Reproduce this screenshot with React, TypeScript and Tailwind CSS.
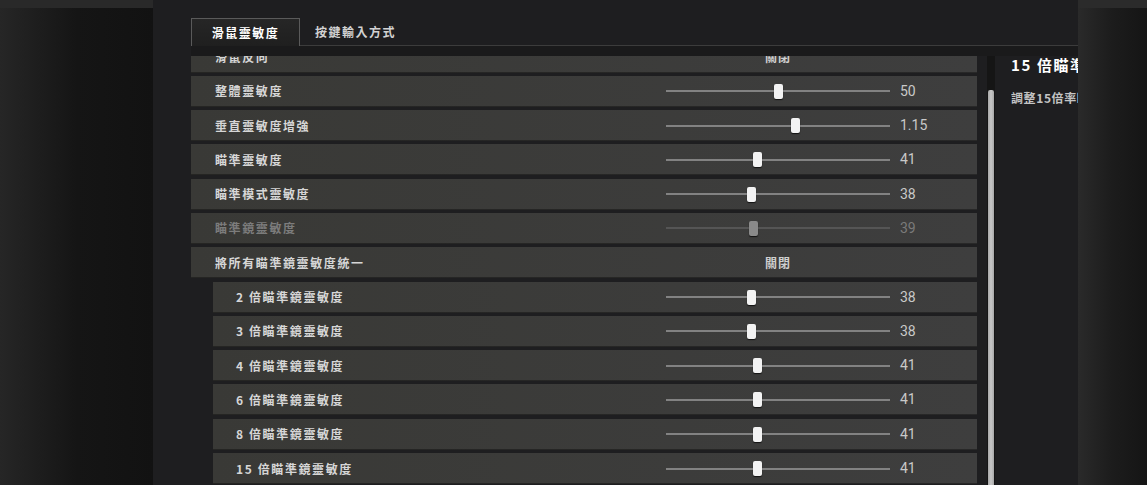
import React from 'react';

type Row = {
  label: string;
  toggle?: string;
  pct?: number;
  value?: string;
  disabled?: boolean;
  sub?: boolean;
};

const rows: Row[] = [
  { label: '滑鼠反向', toggle: '關閉' },
  { label: '整體靈敏度', pct: 50.2, value: '50' },
  { label: '垂直靈敏度增強', pct: 57.6, value: '1.15' },
  { label: '瞄準靈敏度', pct: 41, value: '41' },
  { label: '瞄準模式靈敏度', pct: 38, value: '38' },
  { label: '瞄準鏡靈敏度', pct: 39, value: '39', disabled: true },
  { label: '將所有瞄準鏡靈敏度統一', toggle: '關閉' },
  { label: '2 倍瞄準鏡靈敏度', pct: 38, value: '38', sub: true },
  { label: '3 倍瞄準鏡靈敏度', pct: 38, value: '38', sub: true },
  { label: '4 倍瞄準鏡靈敏度', pct: 41, value: '41', sub: true },
  { label: '6 倍瞄準鏡靈敏度', pct: 41, value: '41', sub: true },
  { label: '8 倍瞄準鏡靈敏度', pct: 41, value: '41', sub: true },
  { label: '15 倍瞄準鏡靈敏度', pct: 41, value: '41', sub: true },
];

function SettingRow({ r }: { r: Row }) {
  return (
    <div
      className={
        'flex items-center h-[31px] shrink-0 bg-linear-to-r from-[#393936] to-[#3e3e3e] shadow-[inset_0_-1px_0_rgba(0,0,0,0.35)] ' +
        (r.sub ? 'ml-[22px] pl-[23px]' : 'pl-[24px]')
      }
    >
      <div
        className={
          'flex-1 text-[12px] font-bold tracking-[1.6px] whitespace-nowrap ' +
          (r.disabled ? 'text-[#7c7c7c]' : 'text-[#d6d6d6]')
        }
      >
        {r.label}
      </div>
      <div className="w-[311px] flex items-center">
        {r.toggle ? (
          <div className="w-[224px] text-center text-[12px] font-bold tracking-[1px] text-[#cfcfcf]">
            {r.toggle}
          </div>
        ) : (
          <>
            <div className="relative w-[224px] h-[15px] flex items-center">
              <div className={'w-full h-[2px] ' + (r.disabled ? 'bg-[#555555]' : 'bg-[#828282]')} />
              <div
                className={
                  'absolute top-0 w-[9px] h-[15px] rounded-[2px] shadow-[0_1px_1px_rgba(0,0,0,0.7)] ' +
                  (r.disabled ? 'bg-[#8a8a8a]' : 'bg-[#f3f3f3]')
                }
                style={{ left: `calc(${r.pct}% - 4.5px)` }}
              />
            </div>
            <div
              className={
                'ml-[10px] text-[14px] font-[Roboto,sans-serif] ' +
                (r.disabled ? 'text-[#7a7a7a]' : 'text-[#c9c9c9]')
              }
            >
              {r.value}
            </div>
          </>
        )}
      </div>
    </div>
  );
}

export default function App() {
  return (
    <div className='flex w-[1147px] h-[485px] overflow-hidden font-["Noto_Sans_CJK_TC","Noto_Sans",sans-serif] bg-[#1e1e20]'>
      {/* left outside */}
      <div className="w-[153px] shrink-0 flex flex-col">
        <div className="h-[8px] bg-[#292929]" />
        <div className="flex-1 bg-linear-to-r from-[#262626] via-[#151515] to-[#121212]" />
      </div>

      {/* main panel */}
      <div className="w-[925px] shrink-0 flex flex-col bg-[#1e1e20]">
        <div className="h-[46px] pt-[18px] pl-[38px] flex">
          <div className="w-[109px] h-[28px] border border-b-0 border-[#5a5a5a] bg-linear-to-b from-[#262626] to-[#1f1f1f] flex items-center justify-center text-[12px] font-bold tracking-[1.5px] text-white">
            滑鼠靈敏度
          </div>
          <div className="flex-1 h-[28px] border-b border-[#3c3c3c] pl-[15px] flex items-center text-[12px] font-bold tracking-[1.5px] text-[#d2d2d2]">
            按鍵輸入方式
          </div>
        </div>
        <div className="h-[10px] ml-[38px] bg-[#1a1a1b]" />
        <div className="flex-1 flex overflow-hidden pl-[38px]">
          <div className="w-[786px] shrink-0 overflow-hidden">
            <div className="mt-[-14.5px] flex flex-col gap-[3.3px]">
              {rows.map((r, i) => (
                <SettingRow key={i} r={r} />
              ))}
            </div>
          </div>
          <div className="ml-[10px] w-[8px] shrink-0 bg-[#151515] flex flex-col">
            <div className="mt-[34px] mx-[1px] flex-1 rounded-t-[2px] bg-linear-to-r from-[#a8a8a8] via-[#c8c8c8] to-[#a8a8a8]" />
          </div>
          <div className="ml-[16px] flex-1 overflow-hidden whitespace-nowrap">
            <div className="text-[15px] leading-[18px] font-bold tracking-[1.6px] text-white">15 倍瞄準鏡靈敏度</div>
            <div className="mt-[17px] text-[12px] leading-[14px] font-bold tracking-[0.6px] text-[#c4c4c4]">調整15倍率瞄準鏡的靈敏度</div>
          </div>
        </div>
      </div>

      {/* right outside */}
      <div className="flex-1 flex flex-col">
        <div className="h-[8px] bg-[#2b2b2b]" />
        <div className="flex-1 bg-linear-to-r from-[#2a2a2a] via-[#1c1c1c] to-[#151515]" />
      </div>
    </div>
  );
}
